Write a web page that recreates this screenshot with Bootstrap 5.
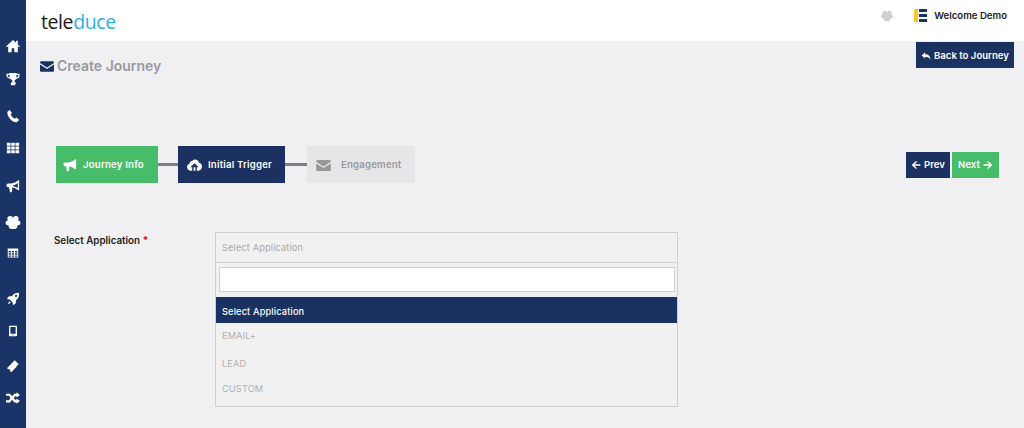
<!DOCTYPE html>
<html lang="en">
<head>
  <meta charset="UTF-8" />
  <meta name="viewport" content="width=device-width, initial-scale=1.0" />
  <title>Create Journey</title>
  <link href="https://cdn.jsdelivr.net/npm/bootstrap@5.3.0/dist/css/bootstrap.min.css" rel="stylesheet">
  <style>
    html, body { height: 428px; overflow: hidden; }
    body { background: #f0f0f3; font-family: Inter, "Noto Sans", sans-serif; color: #222; font-size: 10px; }
    .navy { background: #1a3161; color: #fff; }
    .leaf { background: #47bd69; color: #fff; }
    .rail { width: 26px; height: 428px; padding-top: 39px; background: #1a3468; }
    .rail-item { height: 14px; width: 26px; display: flex; align-items: center; justify-content: center; }
    .rail-item svg { width: 14px; height: 14px; fill: #fff; }
    .rail-item svg.slim { width: 12px; height: 12px; }
    .rail-item svg.wide { width: 16px; height: 15px; }
    .rail-item:nth-child(2) { margin-top: 19px; }
    .rail-item:nth-child(3) { margin-top: 23px; }
    .rail-item:nth-child(4) { margin-top: 18px; }
    .rail-item:nth-child(5) { margin-top: 24px; }
    .rail-item:nth-child(6) { margin-top: 22px; }
    .rail-item:nth-child(7) { margin-top: 17px; }
    .rail-item:nth-child(8) { margin-top: 32px; }
    .rail-item:nth-child(9) { margin-top: 18px; }
    .rail-item:nth-child(10) { margin-top: 21px; }
    .rail-item:nth-child(11) { margin-top: 18px; }
    .topbar { height: 41px; background: #fff; padding: 0 17px 0 15px; }
    .brand { font-family: "Open Sans", sans-serif; font-size: 19.5px; letter-spacing: -.4px; line-height: 1; color: #1b1b1b; font-weight: 500; margin-top: 2px; }
    .brand span { color: #2eaee6; }
    .top-right { margin-bottom: 9px; }
    .paw { width: 12px; height: 12px; fill: #cfcfcf; margin-right: 21px; }
    .hello { font-weight: 600; font-size: 9.6px; color: #1c1c1c; margin-left: 7px; }
    .page-head { height: 105px; padding: 1px 10px 0 14px; }
    .page-title { font-size: 14px; font-weight: 600; color: #9a9a9e; margin: 16px 0 0; line-height: 16px; }
    .page-title svg { width: 14px; height: 11px; fill: #1a3161; margin-right: 3px; vertical-align: -1px; }
    .tool-btn { border: 0; border-radius: 0; font-size: 9.6px; font-weight: 600; height: 26px; padding: 1px 0 0; display: flex; align-items: center; justify-content: center; gap: 3px; }
    .tool-btn svg { width: 10px; height: 10px; fill: #fff; }
    .back-btn { width: 98px; padding-top: 2px; }
    .prev-btn { width: 44px; }
    .next-btn { width: 47px; margin-left: 2px; margin-right: 25px; }
    .wizard { padding-left: 30px; height: 37px; }
    .step { height: 37px; padding-top: 1px; font-size: 9.6px; font-weight: 600; letter-spacing: .2px; display: flex; align-items: center; }
    .step svg { fill: currentColor; }
    .step-one { width: 102px; padding-left: 7px; gap: 6px; }
    .step-two { width: 107px; padding-left: 9px; gap: 6px; }
    .step-three { width: 108px; padding-left: 9px; gap: 10px; background: #e6e6e8; color: #98989b; }
    .link-bar { height: 3px; background: #808084; }
    .form-zone { padding: 49px 0 0 28px; }
    .field-label { width: 161px; font-weight: 600; font-size: 9.8px; padding-top: 3px; line-height: 12px; color: #222; }
    .field-label b { color: #e0202c; }
    .picker { width: 463px; height: 175px; background: #f1f1f2; border: 1px solid #cfcfd1; }
    .picker-head { height: 30px; padding-left: 6px; color: #a9a9ab; font-size: 9.2px; letter-spacing: .15px; border-bottom: 1px solid #d4d4d6; display: flex; align-items: center; }
    .picker-search { padding: 4px 2px 4px 3px; height: 34px; }
    .picker-search .form-control { height: 25px; border-radius: 0; border: 1px solid #cfcfd1; padding: 0 4px; }
    .picker-opt { padding-left: 6px; font-size: 9.2px; letter-spacing: .15px; color: #b0b0b2; display: flex; align-items: center; }
    .opt-on { height: 26px; padding-top: 3px; background: #1a3161; color: #fff; font-weight: 500; }
    .opt-email { height: 25px; }
    .opt-lead { height: 29px; margin-top: 1px; }
    .opt-custom { height: 21px; }
  </style>
</head>
<body>
  <div class="d-flex">
    <!-- Side rail -->
    <nav class="rail flex-shrink-0">
      <div class="rail-item"><svg viewBox="0 0 16 16"><path d="M8 1 0 8.500l1 1L2.500 8v7h4v-4.500h3V15h4V8l1.500 1.500 1-1-2.500-2.300V2h-2v2.400z"/></svg></div>
      <div class="rail-item"><svg viewBox="0 0 16 16"><path d="M4 1h8v1h3.500v2c0 2.200-1.500 3.600-3.900 4-.5.800-1.100 1.300-1.800 1.600V12h1.700v1.500H10.500V15h-5v-1.500H5.500V12h1.700V9.600c-.7-.3-1.300-.8-1.800-1.600C3 7.600 .5 6.200.5 4V2H4zM2 3.500V4c0 1.100.9 2 2.300 2.500C4.100 5.600 4 4.600 4 3.500zm10 0c0 1.100-.1 2.100-.3 3C13.100 6 14 5.100 14 4v-.5z"/></svg></div>
      <div class="rail-item"><svg viewBox="0 0 16 16"><path d="M4.300 1 2 2.500C1 4 1.500 7 4 10.500c2.500 3.200 6 5 8.500 4.500l2.500-2.300-3-3-2 1.300C8.500 10.500 6 8 5.300 6.300L6.800 4.500z"/></svg></div>
      <div class="rail-item"><svg viewBox="0 0 16 16"><path d="M1 2h4.200v3.500H1zm5 0h4v3.500H6zm4.800 0H15v3.500h-4.200zM1 6.300h4.200v3.400H1zm5 0h4v3.400H6zm4.800 0H15v3.400h-4.200zM1 10.500h4.200V14H1zm5 0h4V14H6zm4.800 0H15V14h-4.200z"/></svg></div>
      <div class="rail-item"><svg viewBox="0 0 16 16"><path fill-rule="evenodd" d="M15 1.500v11l-1.200.3C12 11 9.500 10 7 9.700V14l-1 1H4.500L3.500 9.500H2.500C1.300 9.500.5 8.500.5 7.200S1.300 5 2.500 5H6c3-.3 6-1.300 7.800-3.500zM13.500 4.500C12 6 10 6.800 8 7.300v1c2 .3 4 1 5.500 2.300z"/></svg></div>
      <div class="rail-item"><svg class="wide" viewBox="0 0 16 16"><circle cx="5" cy="4" r="3"/><circle cx="11" cy="4" r="3"/><circle cx="2.600" cy="8.400" r="2.600"/><circle cx="13.400" cy="8.400" r="2.600"/><path d="M8 4.500c3 0 5 2.500 5 5.500 0 3-1.500 5-3.500 5h-3C4.500 15 3 13 3 10c0-3 2-5.500 5-5.500z"/></svg></div>
      <div class="rail-item"><svg class="slim" viewBox="0 0 16 16"><path fill-rule="evenodd" d="M1 2h14v12H1zm1.200 3.300v2h3.200v-2zm4.400 0v2h2.800v-2zm4 0v2h3.200v-2zM2.200 8.300v1.900h3.200V8.300zm4.400 0v1.900h2.800V8.300zm4 0v1.900h3.200V8.300zM2.200 11.200v1.700h3.200v-1.700zm4.400 0v1.700h2.800v-1.700zm4 0v1.700h3.200v-1.700z"/></svg></div>
      <div class="rail-item"><svg viewBox="0 0 16 16"><path fill-rule="evenodd" d="M15 1c.2 3.500-.8 6.300-3.500 8.300L11 13l-3 2-.5-3.200L4.300 8.500 1 8l2-3 3.800-.5C8.800 1.800 11.500.8 15 1zm-3.500 2.200a1.300 1.300 0 1 0 0 2.600 1.300 1.300 0 0 0 0-2.600zM3.800 10.500l1.700 1.700L2 14z"/></svg></div>
      <div class="rail-item"><svg class="slim" viewBox="0 0 16 16"><path fill-rule="evenodd" d="M3.500 1h9l.8.800v12.400l-.8.800h-9l-.8-.8V1.800zM4.500 2.800v9h7v-9zM8 12.500a.8.800 0 1 0 0 1.600.8.800 0 0 0 0-1.600z"/></svg></div>
      <div class="rail-item"><svg viewBox="0 0 16 16"><path d="M10 1.500 14.500 6l-1.300 1.300-.6-.1-.4.600.1.700L6 15l-1.400-1.400.2-1-1-1-1 .2L1 10.500z"/></svg></div>
      <div class="rail-item"><svg viewBox="0 0 16 16"><path d="M12 1.500 16 4.500l-4 3V6h-1.500L8.900 8l1.600 2H12V8.500l4 3-4 3V13H9.500L7 10 4.500 13H0v-2.500h3.500L5.100 8 3.500 5.500H0V3h4.500L7 6l2.500-3H12z"/></svg></div>
    </nav>

    <div class="flex-grow-1">
      <!-- Top bar -->
      <header class="topbar d-flex align-items-center justify-content-between">
        <div class="brand">tele<span>duce</span></div>
        <div class="top-right d-flex align-items-center">
          <svg class="paw" viewBox="0 0 16 16"><circle cx="5" cy="4" r="3"/><circle cx="11" cy="4" r="3"/><circle cx="2.600" cy="8.400" r="2.600"/><circle cx="13.400" cy="8.400" r="2.600"/><path d="M8 4.500c3 0 5 2.500 5 5.500 0 3-1.500 5-3.500 5h-3C4.500 15 3 13 3 10c0-3 2-5.500 5-5.500z"/></svg>
          <svg width="13" height="13" viewBox="0 0 13 13"><rect width="4" height="13" fill="#f7c52d"/><rect x="5" width="8" height="3" fill="#1a3161"/><rect x="5" y="5" width="8" height="3" fill="#1a3161"/><rect x="5" y="10" width="8" height="3" fill="#1a3161"/></svg>
          <span class="hello">Welcome Demo</span>
        </div>
      </header>

      <!-- Page heading -->
      <div class="page-head d-flex justify-content-between align-items-start">
        <h1 class="page-title"><svg viewBox="0 0 16 12"><path d="M1.500 0h13c.8 0 1.500.7 1.500 1.500v.5L8 7 0 2v-.5C0 .7.700 0 1.500 0zM0 3.800l8 5 8-5v6.700c0 .8-.7 1.500-1.500 1.500h-13C.7 12 0 11.300 0 10.500z"/></svg>Create Journey</h1>
        <button class="btn navy tool-btn back-btn"><svg viewBox="0 0 16 16"><path d="M6.500 2v3.200c5 0 8.500 2.600 8.500 8.800-1.300-3.600-4-5-8.500-5V12L1 7z"/></svg>Back to Journey</button>
      </div>

      <!-- Wizard steps -->
      <div class="wizard d-flex align-items-center">
        <div class="step step-one leaf"><svg width="14" height="14" viewBox="0 0 16 16"><path d="M15 1.500v11l-1.200.3C12 11 9.500 10 7 9.700V14l-1 1H4.500L3.500 9.500H2.500C1.300 9.500.5 8.500.5 7.200S1.300 5 2.500 5H6c3-.3 6-1.300 7.800-3.500z"/></svg>Journey Info</div>
        <div class="link-bar" style="width:20px"></div>
        <div class="step step-two navy"><svg width="15" height="12" viewBox="0 0 16 12"><path fill-rule="evenodd" d="M8.500 0c2.300 0 4 1.500 4.300 3.700C14.700 4 16 5.500 16 7.500 16 9.800 14.300 12 12 12h-1.500V8.500h2L8 4 3.500 8.500h2V12H3.500C1.500 12 0 10.200 0 8.200c0-1.700 1-3 2.500-3.500C3 2.500 4.500 1.500 5.500 1.700 6.200.6 7.300 0 8.500 0zM7 8.500h2V12H7z"/></svg>Initial Trigger</div>
        <div class="link-bar" style="width:22px"></div>
        <div class="step step-three"><svg width="15" height="11" viewBox="0 0 16 12"><path d="M1.500 0h13c.8 0 1.500.7 1.500 1.500v.5L8 7 0 2v-.5C0 .7.700 0 1.500 0zM0 3.800l8 5 8-5v6.700c0 .8-.7 1.500-1.500 1.500h-13C.7 12 0 11.300 0 10.500z"/></svg>Engagement</div>
        <div class="d-flex ms-auto">
          <button class="btn navy tool-btn prev-btn"><svg viewBox="0 0 16 16"><path d="M8 1.500 9.500 3 5.700 6.800H15v2.400H5.700L9.500 13 8 14.500 1 8z"/></svg>Prev</button>
          <button class="btn leaf tool-btn next-btn">Next<svg viewBox="0 0 16 16"><path d="M8 1.500 6.500 3l3.800 3.800H1v2.400h9.300L6.500 13 8 14.500 15 8z"/></svg></button>
        </div>
      </div>

      <!-- Application select -->
      <div class="form-zone d-flex">
        <label class="field-label">Select Application <b>*</b></label>
        <div class="picker">
          <div class="picker-head">Select Application</div>
          <div class="picker-search"><input type="text" class="form-control" aria-label="Search"></div>
          <div class="picker-opt opt-on">Select Application</div>
          <div class="picker-opt opt-email">EMAIL+</div>
          <div class="picker-opt opt-lead">LEAD</div>
          <div class="picker-opt opt-custom">CUSTOM</div>
        </div>
      </div>
    </div>
  </div>
  <script src="https://cdn.jsdelivr.net/npm/bootstrap@5.3.0/dist/js/bootstrap.bundle.min.js"></script>
</body>
</html>
